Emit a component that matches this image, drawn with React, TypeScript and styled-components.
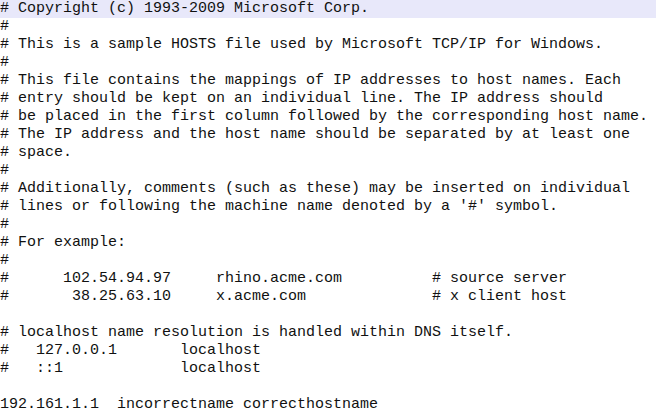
import React from "react";
import styled, { createGlobalStyle } from "styled-components";

const Global = createGlobalStyle`
  html, body { margin: 0; padding: 0; background: #ffffff; }
`;

const Editor = styled.div`
  width: 656px;
  height: 417px;
  overflow: hidden;
  background: #ffffff;
  font-family: "Liberation Mono", "Courier New", monospace;
  font-size: 15px;
  line-height: 18px;
  color: #111111;
  display: flex;
  flex-direction: column;
`;

const Line = styled.div<{ $current?: boolean }>`
  height: 18px;
  white-space: pre;
  padding-left: 0;
  background: ${(p) => (p.$current ? "#e8e8fa" : "transparent")};
`;

const lines = [
  "# Copyright (c) 1993-2009 Microsoft Corp.",
  "#",
  "# This is a sample HOSTS file used by Microsoft TCP/IP for Windows.",
  "#",
  "# This file contains the mappings of IP addresses to host names. Each",
  "# entry should be kept on an individual line. The IP address should",
  "# be placed in the first column followed by the corresponding host name.",
  "# The IP address and the host name should be separated by at least one",
  "# space.",
  "#",
  "# Additionally, comments (such as these) may be inserted on individual",
  "# lines or following the machine name denoted by a '#' symbol.",
  "#",
  "# For example:",
  "#",
  "#      102.54.94.97     rhino.acme.com          # source server",
  "#       38.25.63.10     x.acme.com              # x client host",
  "",
  "# localhost name resolution is handled within DNS itself.",
  "#   127.0.0.1       localhost",
  "#   ::1             localhost",
  "",
  "192.161.1.1  incorrectname correcthostname",
];

export default function App() {
  return (
    <>
      <Global />
      <Editor>
        {lines.map((l, i) => (
          <Line key={i} $current={i === 0}>
            {l}
          </Line>
        ))}
      </Editor>
    </>
  );
}
